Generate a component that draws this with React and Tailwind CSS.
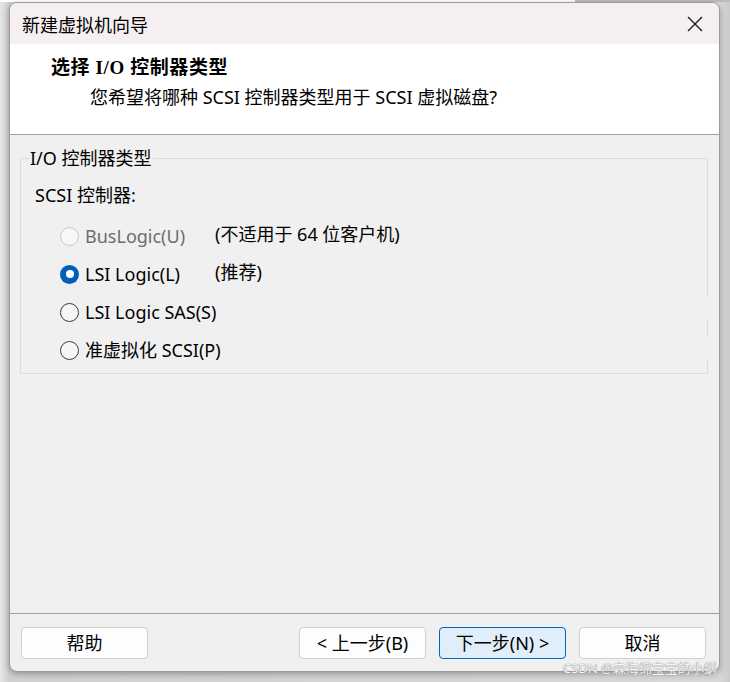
import React from 'react';

const uiFont = { fontFamily: '"Noto Sans", "Noto Sans CJK SC", sans-serif' };

function Radio({ checked, disabled }) {
  if (checked) {
    return (
      <span className="flex h-[19px] w-[19px] shrink-0 items-center justify-center rounded-full bg-[#005fb8]">
        <span className="h-[8px] w-[8px] rounded-full bg-white" />
      </span>
    );
  }
  return (
    <span
      className={
        disabled
          ? 'h-[19px] w-[19px] shrink-0 rounded-full border border-[#c8c8c8] bg-[#f7f7f7]'
          : 'h-[19px] w-[19px] shrink-0 rounded-full border border-[#3c3c3c] bg-[#f6f6f6]'
      }
    />
  );
}

function Button({ children, primary, className = '' }) {
  return (
    <button
      className={
        'h-[32px] w-[127px] rounded-[4px] border text-[18px] text-black ' +
        (primary ? 'border-[#0067c0] bg-[#e0eef9] ' : 'border-[#d0d0d0] bg-[#fdfdfd] ') +
        className
      }
      style={uiFont}
    >
      {children}
    </button>
  );
}

export default function App() {
  const options = [
    { label: 'BusLogic(U)', note: '(不适用于 64 位客户机)', disabled: true },
    { label: 'LSI Logic(L)', note: '(推荐)', checked: true },
    { label: 'LSI Logic SAS(S)' },
    { label: '准虚拟化 SCSI(P)' },
  ];

  return (
    <div className="relative h-[682px] w-[730px] overflow-hidden bg-[linear-gradient(to_right,#e6e6e6,#d0d0d0_9px,#d8d8d8_720px,#cacaca)]" style={uiFont}>
      <div className="h-[2px] bg-[linear-gradient(to_right,#ffffff_575px,#bcbcbc_575px)]" />

      <div className="ml-[9px] flex h-[670px] w-[711px] flex-col overflow-hidden rounded-[8px] border border-[#9c9c9c] bg-[#f0f0f0] shadow-[0_2px_6px_rgba(0,0,0,0.3)]">
        {/* title bar */}
        <div className="flex h-[41px] shrink-0 items-center justify-between bg-[#f6eff1] pl-[12px] pr-[16px]">
          <span className="text-[18px] leading-none text-black" style={{ fontFamily: '"Noto Sans CJK SC", sans-serif' }}>
            新建虚拟机向导
          </span>
          <svg width="16" height="16" viewBox="0 0 16 16" fill="none" stroke="#1a1a1a" strokeWidth="1.4">
            <path d="M1 1 L15 15 M15 1 L1 15" />
          </svg>
        </div>

        {/* header */}
        <div className="h-[91px] shrink-0 border-b border-[#a0a0a0] bg-white pl-[41px] pt-[12px]">
          <div
            className="text-[19px] font-bold leading-[24px] tracking-[0.6px] text-black"
            style={{ fontFamily: '"Liberation Serif", "Noto Sans CJK SC", serif' }}
          >
            选择 I/O 控制器类型
          </div>
          <div className="mt-[5px] pl-[39px] text-[18px] leading-[24px] text-black">
            您希望将哪种 SCSI 控制器类型用于 SCSI 虚拟磁盘?
          </div>
        </div>

        {/* body */}
        <div className="h-[478px] shrink-0 pt-[11px]">
          <fieldset className="relative ml-[10px] mr-[11px] border border-[#dcdcdc] pb-[4px] pl-[14px]">
            <legend className="ml-[-6px] px-[1px] text-[18px] leading-[24px] text-black">I/O 控制器类型</legend>
            <div className="mt-[13px] text-[18px] leading-[24px] text-black">SCSI 控制器:</div>
            <div className="mt-[10px] pl-[25px]">
              {options.map((o) => (
                <div key={o.label} className="flex h-[38px] items-center">
                  <div className="flex w-[155px] items-center gap-[6px]">
                    <Radio checked={o.checked} disabled={o.disabled} />
                    <span className={'whitespace-nowrap text-[18px] ' + (o.disabled ? 'text-[#6d6d6d]' : 'text-black')}>
                      {o.label}
                    </span>
                  </div>
                  {o.note && <span className="mt-[-4px] whitespace-nowrap text-[18px] text-black">{o.note}</span>}
                </div>
              ))}
            </div>
            {/* gaps on the right edge */}
            <span className="absolute right-[-1px] top-[127px] h-[23px] w-[1px] bg-[#f0f0f0]" />
            <span className="absolute right-[-1px] top-[167px] h-[22px] w-[1px] bg-[#f0f0f0]" />
          </fieldset>
        </div>

        {/* footer */}
        <div className="flex flex-1 border-t border-[#a0a0a0] pl-[11px] pr-[13px] pt-[13px]">
          <Button>帮助</Button>
          <div className="ml-auto flex gap-[13px]">
            <Button>&lt; 上一步(B)</Button>
            <Button primary>下一步(N) &gt;</Button>
            <Button>取消</Button>
          </div>
        </div>
      </div>

      <span
        className="absolute left-[563px] top-[659px] whitespace-nowrap text-[13px] leading-[18px] text-[#f4f4f4] [text-shadow:0_0_1px_#8a8a8a,0_0_1px_#8a8a8a]"
        style={{ fontFamily: '"Noto Sans", "Noto Sans CJK SC", sans-serif' }}
      >
        CSDN @森海绵宝宝的小蜗
      </span>
    </div>
  );
}
